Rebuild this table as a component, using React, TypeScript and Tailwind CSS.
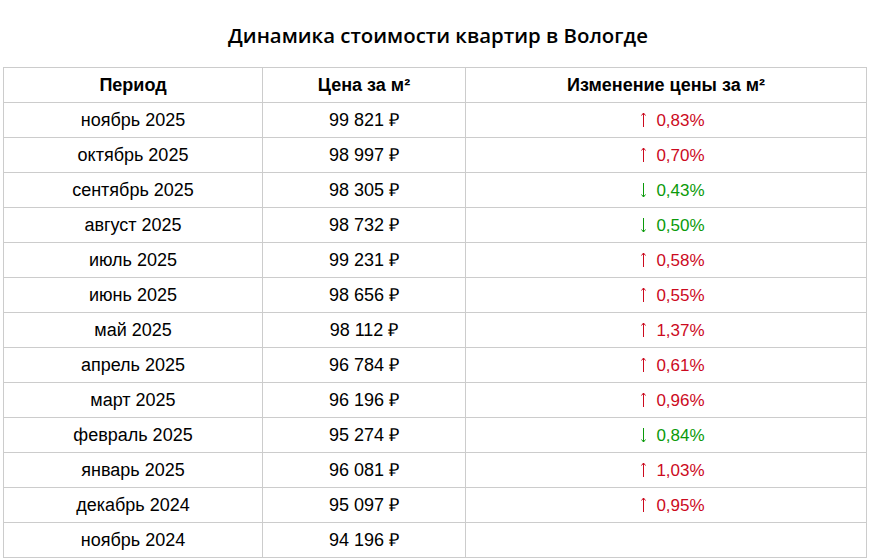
const rows: { period: string; price: string; change?: { up: boolean; value: string } }[] = [
  { period: "ноябрь 2025", price: "99 821 ₽", change: { up: true, value: "0,83%" } },
  { period: "октябрь 2025", price: "98 997 ₽", change: { up: true, value: "0,70%" } },
  { period: "сентябрь 2025", price: "98 305 ₽", change: { up: false, value: "0,43%" } },
  { period: "август 2025", price: "98 732 ₽", change: { up: false, value: "0,50%" } },
  { period: "июль 2025", price: "99 231 ₽", change: { up: true, value: "0,58%" } },
  { period: "июнь 2025", price: "98 656 ₽", change: { up: true, value: "0,55%" } },
  { period: "май 2025", price: "98 112 ₽", change: { up: true, value: "1,37%" } },
  { period: "апрель 2025", price: "96 784 ₽", change: { up: true, value: "0,61%" } },
  { period: "март 2025", price: "96 196 ₽", change: { up: true, value: "0,96%" } },
  { period: "февраль 2025", price: "95 274 ₽", change: { up: false, value: "0,84%" } },
  { period: "январь 2025", price: "96 081 ₽", change: { up: true, value: "1,03%" } },
  { period: "декабрь 2024", price: "95 097 ₽", change: { up: true, value: "0,95%" } },
  { period: "ноябрь 2024", price: "94 196 ₽" },
];

const cell = "border border-[#cccccc] h-[35px] p-0 text-center align-middle";

// тонкая стрелка как в оригинале (системный шрифт)
function Arrow({ up }: { up: boolean }) {
  return (
    <svg width="7" height="16" viewBox="0 0 7 16" className="inline-block align-[-2px] mr-[9px]">
      {up ? (
        <path d="M3.5 1V15M1.5 3.5L3.5 1L5.5 3.5" stroke="currentColor" strokeWidth="1" fill="none" />
      ) : (
        <path d="M3.5 1V15M1.5 12.5L3.5 15L5.5 12.5" stroke="currentColor" strokeWidth="1" fill="none" />
      )}
    </svg>
  );
}

export default function App() {
  return (
    <div className="w-[876px] h-[560px] bg-white overflow-hidden">
      <h2 className="pt-[21px] h-[67px] text-center text-[20.4px] font-semibold text-black font-['Open_Sans',sans-serif] leading-[28px]">
        Динамика стоимости квартир в Вологде
      </h2>
      <table className="ml-[3px] w-[864px] border-collapse font-['Liberation_Sans',Arial,sans-serif] text-[18px] text-black">
        <colgroup>
          <col className="w-[259px]" />
          <col className="w-[203px]" />
          <col />
        </colgroup>
        <thead>
          <tr>
            <th className={cell + " font-bold"}>Период</th>
            <th className={cell + " font-bold"}>Цена за м²</th>
            <th className={cell + " font-bold"}>Изменение цены за м²</th>
          </tr>
        </thead>
        <tbody>
          {rows.map((r) => (
            <tr key={r.period}>
              <td className={cell}>{r.period}</td>
              <td className={cell}>{r.price}</td>
              <td className={cell + " pl-[13px]"}>
                {r.change && (
                  <span className={"text-[17px] " + (r.change.up ? "text-[#cc0a1e]" : "text-[#0a9a0a]")}>
                    <Arrow up={r.change.up} />
                    {r.change.value}
                  </span>
                )}
              </td>
            </tr>
          ))}
        </tbody>
      </table>
    </div>
  );
}
